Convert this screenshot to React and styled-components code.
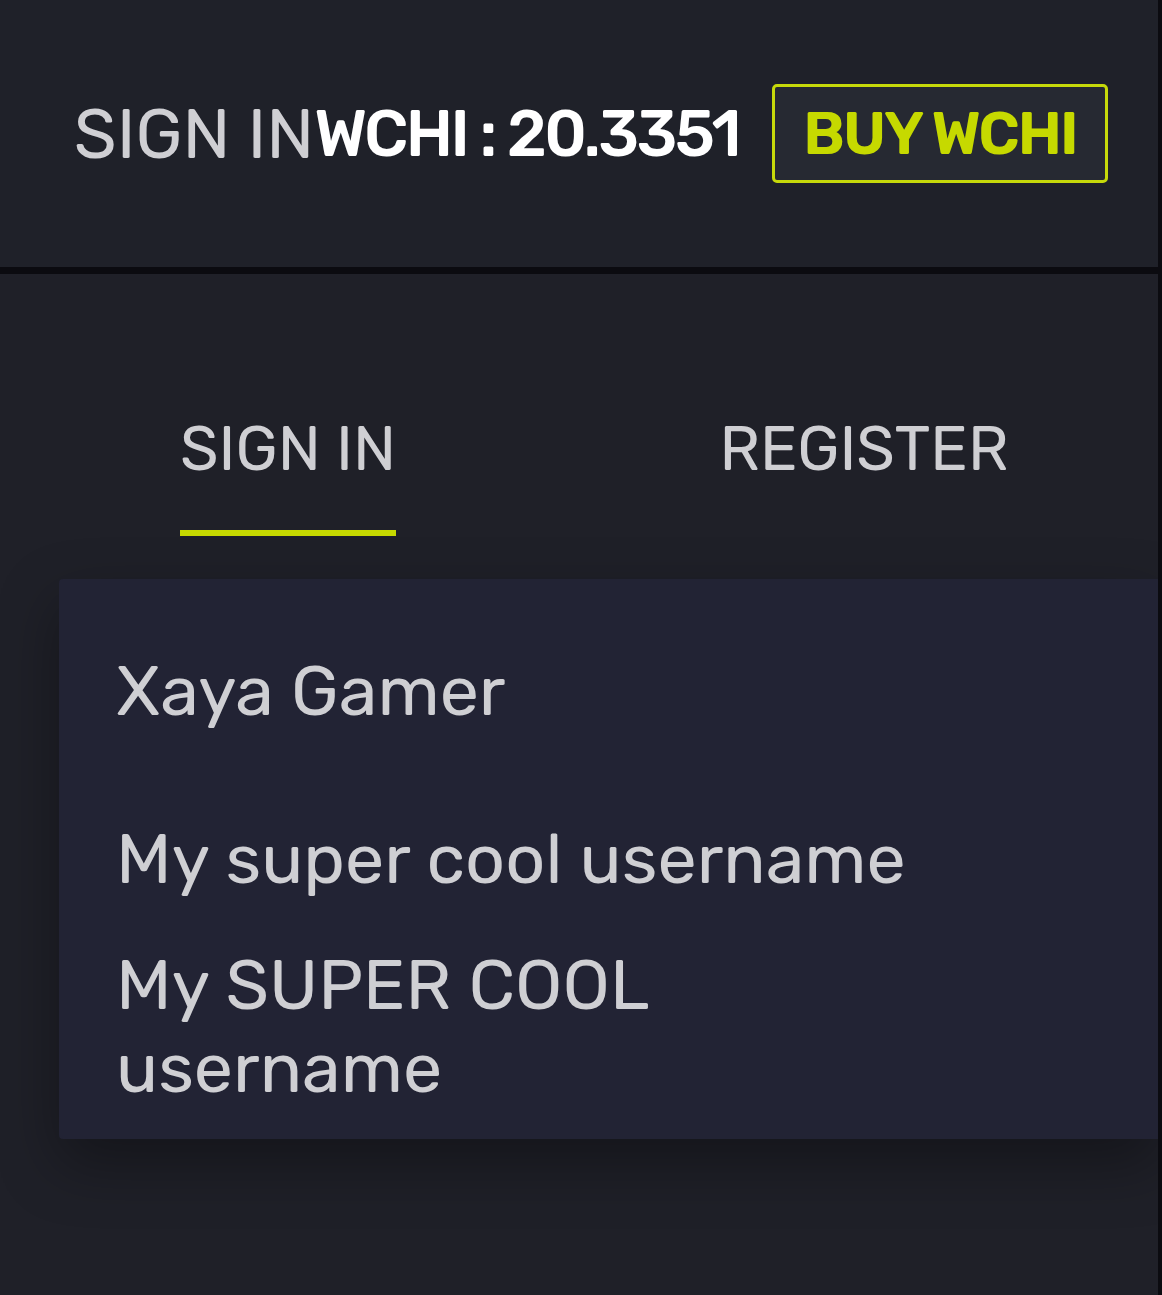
import React from 'react';
import styled, { createGlobalStyle } from 'styled-components';

const Global = createGlobalStyle`
  html, body {
    margin: 0;
    padding: 0;
    background: #1f2028;
  }
  body {
    font-family: 'Rubik', Roboto, 'Noto Sans', sans-serif;
  }
`;

const accounts = [
  { name: 'Xaya Gamer', first: true },
  { name: 'My super cool username' },
  { name: 'My SUPER COOL username' },
];

export default function App() {
  return (
    <Page>
      <Global />
      <Header>
        <SignInLink>SIGN IN</SignInLink>
        <Balance>WCHI : 20.3351</Balance>
        <BuyButton>BUY WCHI</BuyButton>
      </Header>
      <Divider />
      <Body>
        <Tabs>
          <Tab>
            <TabLabel active>SIGN IN</TabLabel>
          </Tab>
          <Tab>
            <TabLabel>REGISTER</TabLabel>
          </Tab>
        </Tabs>
        <Card>
          {accounts.map((a) => (
            <Account key={a.name} first={a.first}>{a.name}</Account>
          ))}
        </Card>
      </Body>
    </Page>
  );
}

const Page = styled.div`
  min-height: 1295px;
  border-right: 4px solid #0b0b10;
  background: #1f2028;
  overflow: hidden;
`;

const Header = styled.header`
  align-items: center;
  background: #1f2129;
  display: flex;
  height: 267px;
  justify-content: flex-end;
  padding-right: 50px;
  box-sizing: border-box;
  white-space: nowrap;
`;

const SignInLink = styled.span`
  color: #cfcfd3;
  font-size: 69px;
  font-weight: 400;
`;

const Balance = styled.span`
  color: #fff;
  font-size: 65px;
  font-weight: 500;
  letter-spacing: -2.7px;
  margin-right: 33px;
`;

const BuyButton = styled.button`
  background: #262932;
  border: 3px solid #c6d90a;
  border-radius: 5px;
  box-sizing: border-box;
  color: #c6d900;
  font-family: inherit;
  font-size: 60px;
  font-weight: 600;
  height: 99px;
  letter-spacing: -2px;
  padding: 0;
  white-space: nowrap;
  width: 336px;
`;

const Divider = styled.div`
  background: #0b0b10;
  height: 7px;
`;

const Body = styled.main`
  padding-top: 144px;
`;

const Tabs = styled.nav`
  display: grid;
  grid-template-columns: 1fr 1fr;
  padding-right: 6px;
`;

const Tab = styled.div`
  display: flex;
  justify-content: center;
`;

const TabLabel = styled.span`
  border-bottom: 6px solid ${(p) => (p.active ? '#c6d900' : 'transparent')};
  color: #cfcfd3;
  font-size: 62px;
  line-height: 1;
  padding-bottom: 50px;
  text-align: center;
`;

const Card = styled.section`
  background: #222334;
  border-radius: 4px 0 0 4px;
  box-shadow: 0 24px 60px rgba(0, 0, 0, 0.35);
  margin: 43px 0 0 59px;
  padding: 71px 57px 29px;
`;

const Account = styled.div`
  color: #cfcfd3;
  font-size: 70px;
  line-height: 83px;
  max-width: 840px;
  padding-bottom: ${(p) => (p.first ? '85px' : '43px')};

  &:last-child {
    padding-bottom: 0;
  }
`;
